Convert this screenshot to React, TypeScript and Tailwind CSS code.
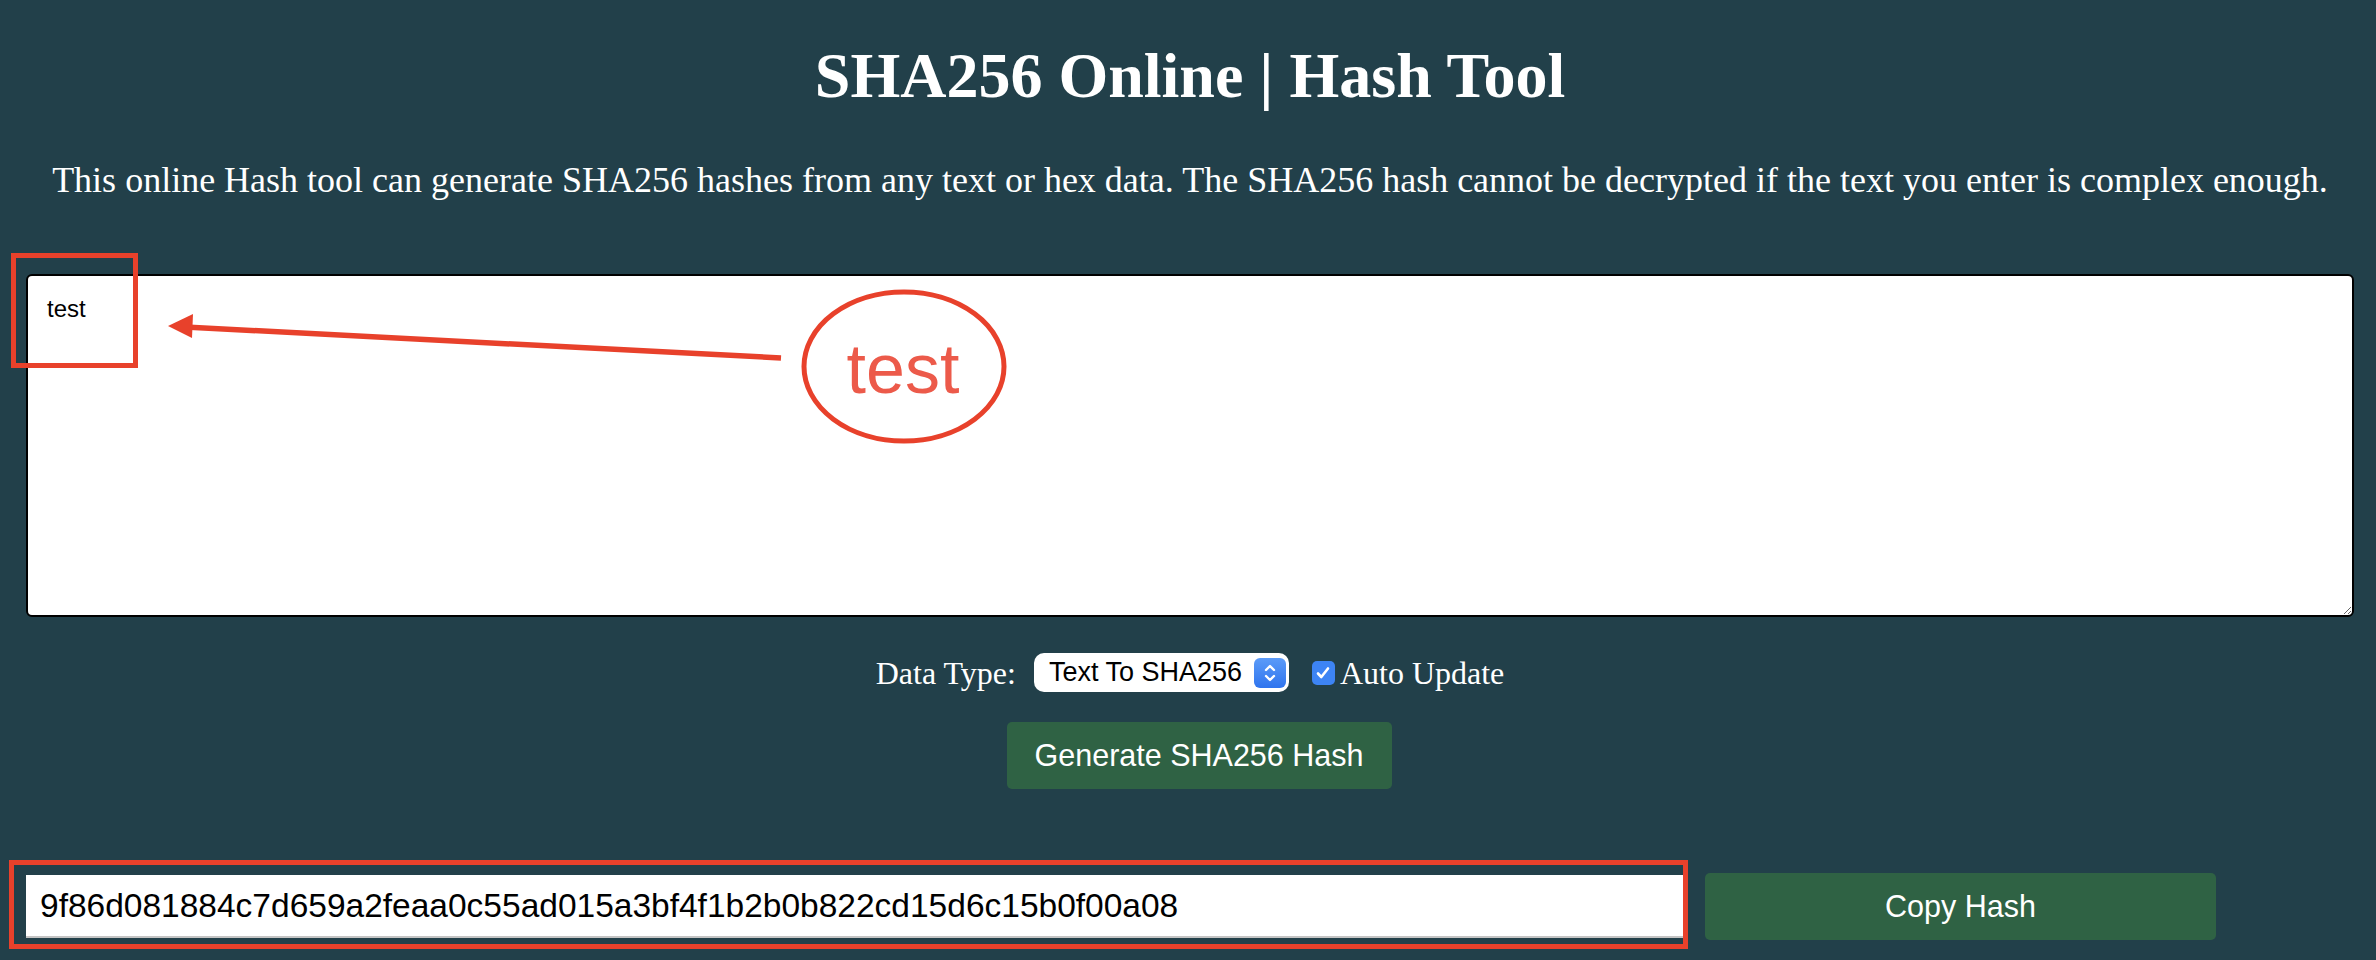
import { useState } from 'react'

const HASH = '9f86d081884c7d659a2feaa0c55ad015a3bf4f1b2b0b822cd15d6c15b0f00a08'

function Stepper() {
  return (
    <span className="flex h-[30px] w-[32px] items-center justify-center rounded-[6px] bg-linear-to-b from-[#5b9bf8] to-[#2f74ee]">
      <svg width="14" height="22" viewBox="0 0 14 22" fill="none" stroke="white" strokeWidth="2.4" strokeLinecap="round" strokeLinejoin="round">
        <path d="M3 8l4-4 4 4" />
        <path d="M3 14l4 4 4-4" />
      </svg>
    </span>
  )
}

function Annotations() {
  // red markup drawn over the screenshot
  return (
    <svg className="pointer-events-none absolute left-0 top-0" width="2376" height="960" viewBox="0 0 2376 960" fill="none">
      <rect x="13.5" y="255.5" width="122" height="110" stroke="#e8412b" strokeWidth="5" />
      <line x1="781" y1="358" x2="185" y2="327" stroke="#e8412b" strokeWidth="5.5" />
      <path d="M168 326 L193 314 L192 338 Z" fill="#e8412b" />
      <ellipse cx="904" cy="366.5" rx="100" ry="74.5" stroke="#e8412b" strokeWidth="5" />
      <text x="903" y="393" textAnchor="middle" fontSize="70" fill="#ec5a4a" fontFamily="'Liberation Sans', Arial, sans-serif">
        test
      </text>
      <rect x="11.5" y="862.5" width="1674" height="84" stroke="#e8412b" strokeWidth="5" />
    </svg>
  )
}

export default function App() {
  const [text, setText] = useState('test')
  const [auto, setAuto] = useState(true)

  return (
    <div className="relative h-[960px] overflow-hidden bg-[#22404a] font-['Liberation_Serif',serif] text-white">
      <div className="pl-[26px] pr-[22px]">
        {/* Header */}
        <h1 className="pt-[42px] text-center text-[64px] font-bold leading-[68px]">SHA256 Online | Hash Tool</h1>
        <p className="mt-[50px] text-center text-[36px] leading-[40px]">
          This online Hash tool can generate SHA256 hashes from any text or hex data. The SHA256 hash cannot be decrypted if the text you enter is complex enough.
        </p>

        {/* Input */}
        <textarea
          value={text}
          onChange={(e) => setText(e.target.value)}
          className="mt-[74px] block h-[343px] w-full rounded-[6px] border-2 border-black bg-white px-[19px] pt-[19px] font-['Liberation_Sans',sans-serif] text-[24px] leading-[28px] text-black outline-none"
        />

        {/* Options */}
        <div className="mt-[36px] flex h-[39px] items-center justify-center text-[32px]">
          <span>Data Type:</span>
          <div className="ml-[18px] flex h-[39px] w-[255px] items-center justify-between rounded-[10px] bg-white pl-[15px] pr-[3px] font-['Liberation_Sans',sans-serif] text-[27px] text-black">
            <span>Text To SHA256</span>
            <Stepper />
          </div>
          <label className="ml-[23px] flex items-center">
            <input type="checkbox" checked={auto} onChange={() => setAuto(!auto)} className="sr-only" />
            <span className="flex h-[24px] w-[23px] items-center justify-center rounded-[5px] bg-[#3d84f4]">
              <svg width="16" height="16" viewBox="0 0 16 16" fill="none" stroke="white" strokeWidth="2.6" strokeLinecap="round" strokeLinejoin="round">
                <path d="M3 8.5l3.3 3.5L13 3.5" />
              </svg>
            </span>
            <span className="ml-[5px]">Auto Update</span>
          </label>
        </div>

        <div className="mt-[30px] flex justify-center pl-[18px]">
          <button className="h-[67px] w-[385px] rounded-[5px] bg-[#2f6244] font-['Liberation_Sans',sans-serif] text-[30.5px] text-white">
            Generate SHA256 Hash
          </button>
        </div>

        {/* Output */}
        <div className="mt-[84px] flex items-center gap-[21px]">
          <input
            readOnly
            value={HASH}
            className="h-[63px] w-[1658px] border-b-2 border-[#c4c4c4] bg-white pl-[14px] font-['Liberation_Sans',sans-serif] text-[33.5px] text-black outline-none"
          />
          <button className="h-[67px] w-[511px] rounded-[5px] bg-[#2f6244] font-['Liberation_Sans',sans-serif] text-[30.5px] text-white">
            Copy Hash
          </button>
        </div>
      </div>

      <Annotations />
    </div>
  )
}
